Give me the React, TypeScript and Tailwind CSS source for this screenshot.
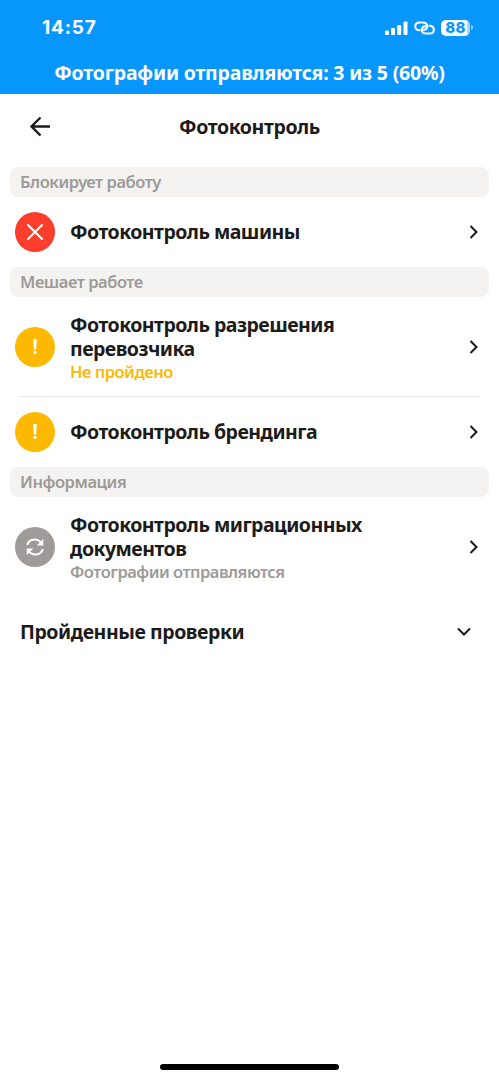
import type { ReactNode } from "react";

const CrossIcon = () => (
  <svg className="h-10 w-10" viewBox="0 0 40 40" fill="none" stroke="white" strokeWidth="2" strokeLinecap="round">
    <path d="M13 13 27 27M27 13 13 27" />
  </svg>
);

const WarningIcon = () => (
  <svg className="h-10 w-10" viewBox="0 0 40 40" fill="white">
    <path d="M18.200 12h3.600l-.7 10.500h-2.200z" />
    <circle cx="20" cy="25.400" r="1.700" />
  </svg>
);

const SyncIcon = () => (
  <svg className="h-10 w-10" viewBox="0 0 40 40" fill="none" stroke="white" strokeWidth="2">
    <path d="M12.200 18C13.200 14.500 16 12.400 19.600 12.400c2.800 0 5 1.200 6.600 3.600" />
    <path d="M27.800 22C26.800 25.500 24 27.600 20.400 27.600c-2.800 0-5-1.200-6.600-3.600" />
    <path d="M28.300 12v6.600h-6.600zM11.700 28v-6.600h6.600z" fill="white" stroke="none" />
  </svg>
);

const ChevronRight = () => (
  <svg className="h-[14px] w-[10px] shrink-0" viewBox="0 0 10 14" fill="none" stroke="#1c1b19" strokeWidth="2">
    <path d="m1.500 1 6 6-6 6" />
  </svg>
);

function StatusBar() {
  return (
    <div className="flex h-[54px] items-center justify-between pl-[42px] pr-[26px] pt-px text-white">
      <span className="font-['Inter'] text-[19px] font-bold leading-6 tracking-[0.8px]">14:57</span>
      <div className="flex items-center gap-[6px]">
        <svg className="h-[14px] w-[23px]" viewBox="0 0 23 14" fill="white">
          <rect x="0" y="9.500" width="4" height="4.500" rx="1" />
          <rect x="6" y="7" width="4" height="7" rx="1" />
          <rect x="12.200" y="4" width="4" height="10" rx="1" />
          <rect x="18.500" y="0.500" width="4" height="13.500" rx="1" />
        </svg>
        <svg className="h-[14px] w-[21px]" viewBox="0 0 21 14" fill="none" stroke="white" strokeWidth="2" strokeLinecap="round">
          <path d="M5.800 9.300C3 9.300 1.200 7.600 1.200 5.300 1.200 3 3 1.400 5.400 1.400h3.200c2.700 0 4.600 1.500 4.600 3.900 0 2-1.400 3.400-3.400 3.400" />
          <path d="M15.200 4.700c2.800 0 4.600 1.700 4.600 4 0 2.300-1.800 3.900-4.200 3.900h-3.200c-2.700 0-4.600-1.500-4.600-3.900 0-2 1.400-3.400 3.400-3.400" />
        </svg>
        <div className="flex items-center gap-px">
          <div className="flex h-4 w-[29px] items-center justify-center rounded-[5px] bg-linear-to-r from-white from-88% to-[#a5d8ff] to-88% font-['Inter'] text-[15px] font-extrabold leading-none tracking-[0.3px] text-[#0796fb]">
            88
          </div>
          <div className="h-[5px] w-[2px] rounded-r bg-[#8accff]" />
        </div>
      </div>
    </div>
  );
}

function Section({ title, children }: { title: string; children: ReactNode }) {
  return (
    <section>
      <h2 className="mx-[10px] h-[30px] whitespace-nowrap rounded-lg bg-[#f4f3f1] pl-[10px] text-[16.5px] font-semibold leading-[30px] tracking-[-0.45px] text-[#9d9a97]">
        {title}
      </h2>
      {children}
    </section>
  );
}

function CheckRow({
  icon,
  iconColor,
  title,
  note,
  noteColor = "",
}: {
  icon: ReactNode;
  iconColor: string;
  title: string;
  note?: string;
  noteColor?: string;
}) {
  return (
    <div className={`flex items-center pl-[15px] pr-5 ${note ? "h-[100px]" : "h-[70px]"}`}>
      <div className={`h-10 w-10 shrink-0 rounded-full ${iconColor}`}>{icon}</div>
      <div className={`ml-[15px] flex-1 ${note ? "pt-[2px]" : ""}`}>
        <p className="whitespace-pre-line text-[19.5px] font-bold leading-6 tracking-[-0.53px]">{title}</p>
        {note && (
          <p className={`text-[16.5px] font-semibold leading-[22px] tracking-[-0.5px] ${noteColor}`}>{note}</p>
        )}
      </div>
      <ChevronRight />
    </div>
  );
}

export default function App() {
  return (
    <div className="flex h-[1080px] w-[499px] flex-col bg-white font-['Noto_Sans',sans-serif] text-[#1c1b19]">
      <header className="h-[94px] bg-[#0796fb]">
        <StatusBar />
        <p className="whitespace-nowrap text-center text-[19.5px] font-bold leading-[38px] tracking-[-0.2px] text-white">
          Фотографии отправляются: 3 из 5 (60%)
        </p>
      </header>

      <nav className="grid h-[73px] grid-cols-[80px_1fr_80px] pt-[21px]">
        <svg className="ml-[29px] h-[22px] w-[22px]" viewBox="0 0 22 22" fill="none" stroke="#1c1b19" strokeWidth="2.400">
          <path d="M11.500 2.500 2.500 11.500l9 9M2.500 11.500H21" />
        </svg>
        <h1 className="text-center text-[19.5px] font-bold leading-6 tracking-[-0.4px]">Фотоконтроль</h1>
      </nav>

      <Section title="Блокирует работу">
        <CheckRow icon={<CrossIcon />} iconColor="bg-[#fc3f2c]" title="Фотоконтроль машины" />
      </Section>

      <Section title="Мешает работе">
        <CheckRow
          icon={<WarningIcon />}
          iconColor="bg-[#fcb900]"
          title={"Фотоконтроль разрешения\nперевозчика"}
          note="Не пройдено"
          noteColor="text-[#fcb900]"
        />
        <div className="mx-5 -mt-px h-px bg-[#e9e8e6]" />
        <CheckRow icon={<WarningIcon />} iconColor="bg-[#fcb900]" title="Фотоконтроль брендинга" />
      </Section>

      <Section title="Информация">
        <CheckRow
          icon={<SyncIcon />}
          iconColor="bg-[#9e9b98]"
          title={"Фотоконтроль миграционных\nдокументов"}
          note="Фотографии отправляются"
          noteColor="text-[#9d9a97]"
        />
      </Section>

      <div className="flex h-[70px] items-center justify-between pl-5 pr-7">
        <span className="text-[19.5px] font-bold leading-6 tracking-[-0.45px]">Пройденные проверки</span>
        <svg className="h-[10px] w-[14px]" viewBox="0 0 14 10" fill="none" stroke="#1c1b19" strokeWidth="2">
          <path d="m1 1.500 6 6 6-6" />
        </svg>
      </div>

      <div className="mx-auto mb-[10px] mt-auto h-[6px] w-[179px] rounded-full bg-black" />
    </div>
  );
}
